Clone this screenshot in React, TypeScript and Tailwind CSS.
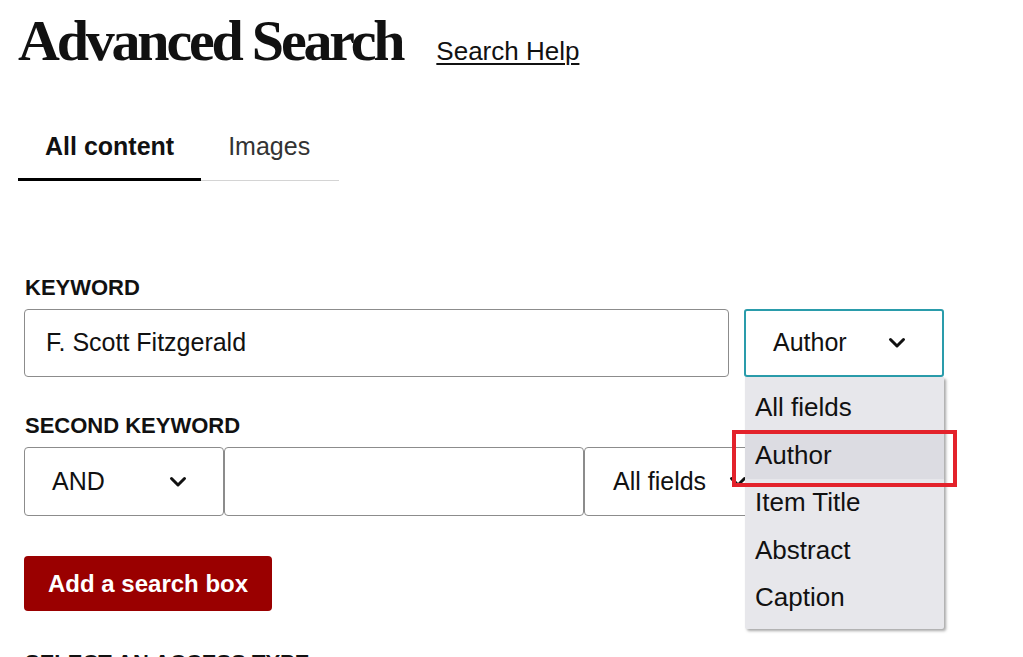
import React from 'react';

const sans = { fontFamily: '"Liberation Sans", Arial, sans-serif' };

function Chevron() {
  return (
    <svg width="18" height="12" viewBox="0 0 18 12" className="shrink-0">
      <path d="M2.5 2.5 L9 9 L15.5 2.5" fill="none" stroke="#111" strokeWidth="3" strokeLinecap="round" strokeLinejoin="round" />
    </svg>
  );
}

const fieldOptions = ['All fields', 'Author', 'Item Title', 'Abstract', 'Caption'];

export default function App() {
  return (
    <div className="min-h-[657px] bg-white text-[#111] pl-[18px] pt-[12px] overflow-hidden" style={sans}>
      <div className="flex items-baseline gap-[34px]">
        <h1 className="text-[58px] leading-none font-bold tracking-[-3.2px] text-[#111]" style={{ fontFamily: '"Liberation Serif", "Times New Roman", serif' }}>
          Advanced Search
        </h1>
        <a className="text-[26px] underline underline-offset-[3px] decoration-[1.5px] text-[#111]">Search Help</a>
      </div>

      <div className="mt-[60px] flex w-[321px] border-b border-[#d4d4d4]">
        <div className="px-[27px] pb-[17px] leading-[30px] text-[25px] font-bold border-b-[3px] border-black -mb-px">All content</div>
        <div className="px-[27px] pb-[17px] leading-[30px] text-[25px] text-[#333]">Images</div>
      </div>

      <div className="pl-[6px] pt-[95px]">
        <div className="text-[22px] leading-[24px] font-bold pl-px">KEYWORD</div>
        <div className="mt-[9px] flex gap-[15px]">
          <div className="w-[705px] h-[68px] border border-[#8c8c8c] rounded-[4px] flex items-center pl-[21px] text-[25px]">
            F. Scott Fitzgerald
          </div>
          <div className="relative w-[200px]">
            <div className="h-[68px] border-2 border-[#2a9cab] rounded-[3px] flex items-center justify-between pl-[27px] pr-[36px] text-[25px]">
              <span>Author</span>
              <Chevron />
            </div>
            <div className="absolute left-px top-[68px] z-10 w-[199px] bg-[#e7e7eb] py-[7px] shadow-[2px_2px_3px_rgba(0,0,0,0.35)] rounded-b-[2px]">
              {fieldOptions.map((o) => (
                <div key={o} className={`h-[47.5px] flex items-center pl-[10px] text-[26px] ${o === 'Author' ? 'bg-[#dcdce2]' : ''}`}>
                  {o}
                </div>
              ))}
              <div className="absolute left-[-13px] top-[53px] w-[225px] h-[57px] border-[4px] border-[#e3222b]" />
            </div>
          </div>
        </div>

        <div className="mt-[37px] text-[22px] leading-[24px] font-bold pl-px">SECOND KEYWORD</div>
        <div className="mt-[9px] flex">
          <div className="w-[200px] h-[69px] border border-[#8c8c8c] rounded-[4px] flex items-center justify-between pl-[27px] pr-[36px] text-[25px]">
            <span>AND</span>
            <Chevron />
          </div>
          <div className="w-[360px] h-[69px] border border-[#8c8c8c] rounded-[4px]" />
          <div className="w-[200px] h-[69px] border border-[#8c8c8c] rounded-[4px] flex items-center justify-between pl-[28px] pr-[36px] text-[25px]">
            <span>All fields</span>
            <Chevron />
          </div>
        </div>

        <button className="mt-[40px] h-[55px] px-[24px] bg-[#9a0000] text-white text-[24px] font-bold rounded-[4px]">
          Add a search box
        </button>

        <div className="mt-[40px] text-[22px] leading-[24px] font-bold pl-px">SELECT AN ACCESS TYPE</div>
      </div>
    </div>
  );
}
